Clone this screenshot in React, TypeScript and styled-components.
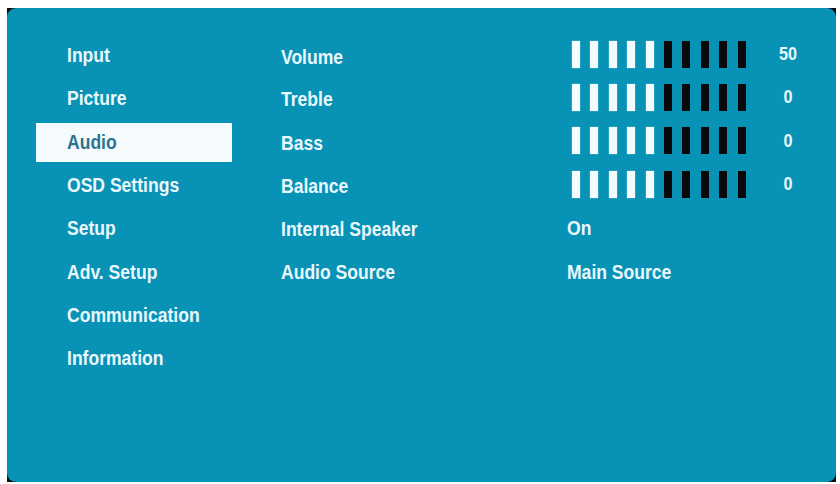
import React from "react";
import styled, { createGlobalStyle } from "styled-components";

const Global = createGlobalStyle`
  html, body { margin: 0; padding: 0; background: #ffffff; }
  body { font-family: "Liberation Sans", Arial, sans-serif; }
`;

const Frame = styled.div`
  margin: 8px 0 0 7px;
  width: 829px;
  height: 474px;
  background: #0b0f12;
`;

const Screen = styled.div`
  width: 100%;
  height: 100%;
  box-sizing: border-box;
  background: #0792b6;
  border-radius: 9px;
  padding: 26px 0 0 29px;
  display: flex;
  color: #e9f8fd;
  font-weight: bold;
  font-size: 19.5px;
`;

const Text = styled.span<{ $origin?: string }>`
  display: inline-block;
  transform: scaleX(0.9);
  transform-origin: ${(p) => p.$origin ?? "left"} center;
  white-space: nowrap;
  position: relative;
  z-index: 1;
`;

const Menu = styled.div`
  width: 196px;
  display: flex;
  flex-direction: column;
`;

const MenuItem = styled.div<{ $active?: boolean }>`
  height: 43.3px;
  display: flex;
  align-items: center;
  box-sizing: border-box;
  padding-left: 31px;
  position: relative;
  color: ${(p) => (p.$active ? "#2b7391" : "#e9f8fd")};
  &::before {
    content: "";
    display: ${(p) => (p.$active ? "block" : "none")};
    position: absolute;
    left: 0;
    right: 0;
    top: 2px;
    bottom: 2px;
    background: #f5fbfd;
    z-index: 0;
  }
`;

const Content = styled.div`
  margin-left: 49px;
  display: grid;
  grid-template-columns: 286px 201px 40px;
  grid-auto-rows: 43.3px;
  align-items: center;
`;

const Label = styled.div<{ $nudge?: number }>`
  padding-top: ${(p) => p.$nudge ?? 0}px;
`;

const Value = styled.div`
  grid-column: span 2;
`;

const Bars = styled.div`
  display: flex;
  gap: 10.4px;
  margin-left: 5px;
  margin-top: -3px;
`;

const Bar = styled.div<{ $on: boolean }>`
  width: 8px;
  height: 27px;
  background: ${(p) => (p.$on ? "#f2fcff" : "#07090b")};
  box-shadow: ${(p) => (p.$on ? "0 0 1px rgba(230,250,255,0.8)" : "none")};
`;

const Num = styled.div`
  text-align: center;
  font-size: 18px;
  margin-top: -2px;
`;

const menu = [
  "Input",
  "Picture",
  "Audio",
  "OSD Settings",
  "Setup",
  "Adv. Setup",
  "Communication",
  "Information",
];

const sliders = [
  { label: "Volume", value: 50, nudge: 3 },
  { label: "Treble", value: 0, nudge: 1 },
  { label: "Bass", value: 0, nudge: 2 },
  { label: "Balance", value: 0, nudge: 1 },
];

const BarRow = ({ level }: { level: number }) => (
  <Bars>
    {Array.from({ length: 10 }).map((_, i) => (
      <Bar key={i} $on={i < level} />
    ))}
  </Bars>
);

export default function App() {
  return (
    <>
      <Global />
      <Frame>
        <Screen>
          <Menu>
            {menu.map((m) => (
              <MenuItem key={m} $active={m === "Audio"}>
                <Text>{m}</Text>
              </MenuItem>
            ))}
          </Menu>
          <Content>
            {sliders.map((s) => (
              <React.Fragment key={s.label}>
                <Label $nudge={s.nudge}>
                  <Text>{s.label}</Text>
                </Label>
                <BarRow level={5} />
                <Num>
                  <Text $origin="center">{s.value}</Text>
                </Num>
              </React.Fragment>
            ))}
            <Label $nudge={1}>
              <Text>Internal Speaker</Text>
            </Label>
            <Value>
              <Text>On</Text>
            </Value>
            <Label>
              <Text>Audio Source</Text>
            </Label>
            <Value>
              <Text>Main Source</Text>
            </Value>
          </Content>
        </Screen>
      </Frame>
    </>
  );
}
